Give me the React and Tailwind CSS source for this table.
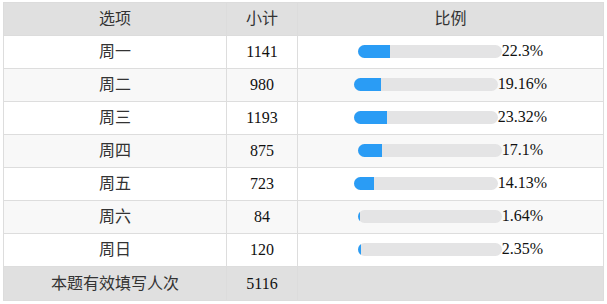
const rows = [
  { name: "周一", count: 1141, pct: 22.3 },
  { name: "周二", count: 980, pct: 19.16 },
  { name: "周三", count: 1193, pct: 23.32 },
  { name: "周四", count: 875, pct: 17.1 },
  { name: "周五", count: 723, pct: 14.13 },
  { name: "周六", count: 84, pct: 1.64 },
  { name: "周日", count: 120, pct: 2.35 },
];

function Bar({ pct }) {
  return (
    <div className="inline-flex items-center">
      <div className="h-[13px] w-[144px] rounded-full bg-[#e4e4e5] overflow-hidden">
        <div className="h-full bg-[#2a9cf5]" style={{ width: `${pct}%` }} />
      </div>
      <span>{pct}%</span>
    </div>
  );
}

export default function App() {
  return (
    <div className="bg-white w-[607px] h-[304px] pt-[2px] pl-[3px] font-['Liberation_Serif','Noto_Sans_CJK_SC',serif]">
      <table className="table-fixed border-collapse w-[601px] text-[16px] text-[#333] text-center">
        <thead>
          <tr className="h-[33px] bg-[#e0e0e0]">
            <th className="w-[223px] font-normal border border-[#dcdcdc]">选项</th>
            <th className="w-[71px] font-normal border border-[#dcdcdc]">小计</th>
            <th className="font-normal border border-[#dcdcdc]">比例</th>
          </tr>
        </thead>
        <tbody>
          {rows.map((r, i) => (
            <tr key={r.name} className={`h-[33px] ${i % 2 ? "bg-[#f8f8f8]" : "bg-white"}`}>
              <td className="border border-[#dddddd]">{r.name}</td>
              <td className="border border-[#dddddd] text-[#111]">{r.count}</td>
              <td className="border border-[#dddddd] text-[#111]">
                <Bar pct={r.pct} />
              </td>
            </tr>
          ))}
          <tr className="h-[34px] bg-[#e0e0e0]">
            <td className="border border-[#dcdcdc]">本题有效填写人次</td>
            <td className="border border-[#dcdcdc] text-[#111]">5116</td>
            <td className="border border-[#dcdcdc]"></td>
          </tr>
        </tbody>
      </table>
    </div>
  );
}
